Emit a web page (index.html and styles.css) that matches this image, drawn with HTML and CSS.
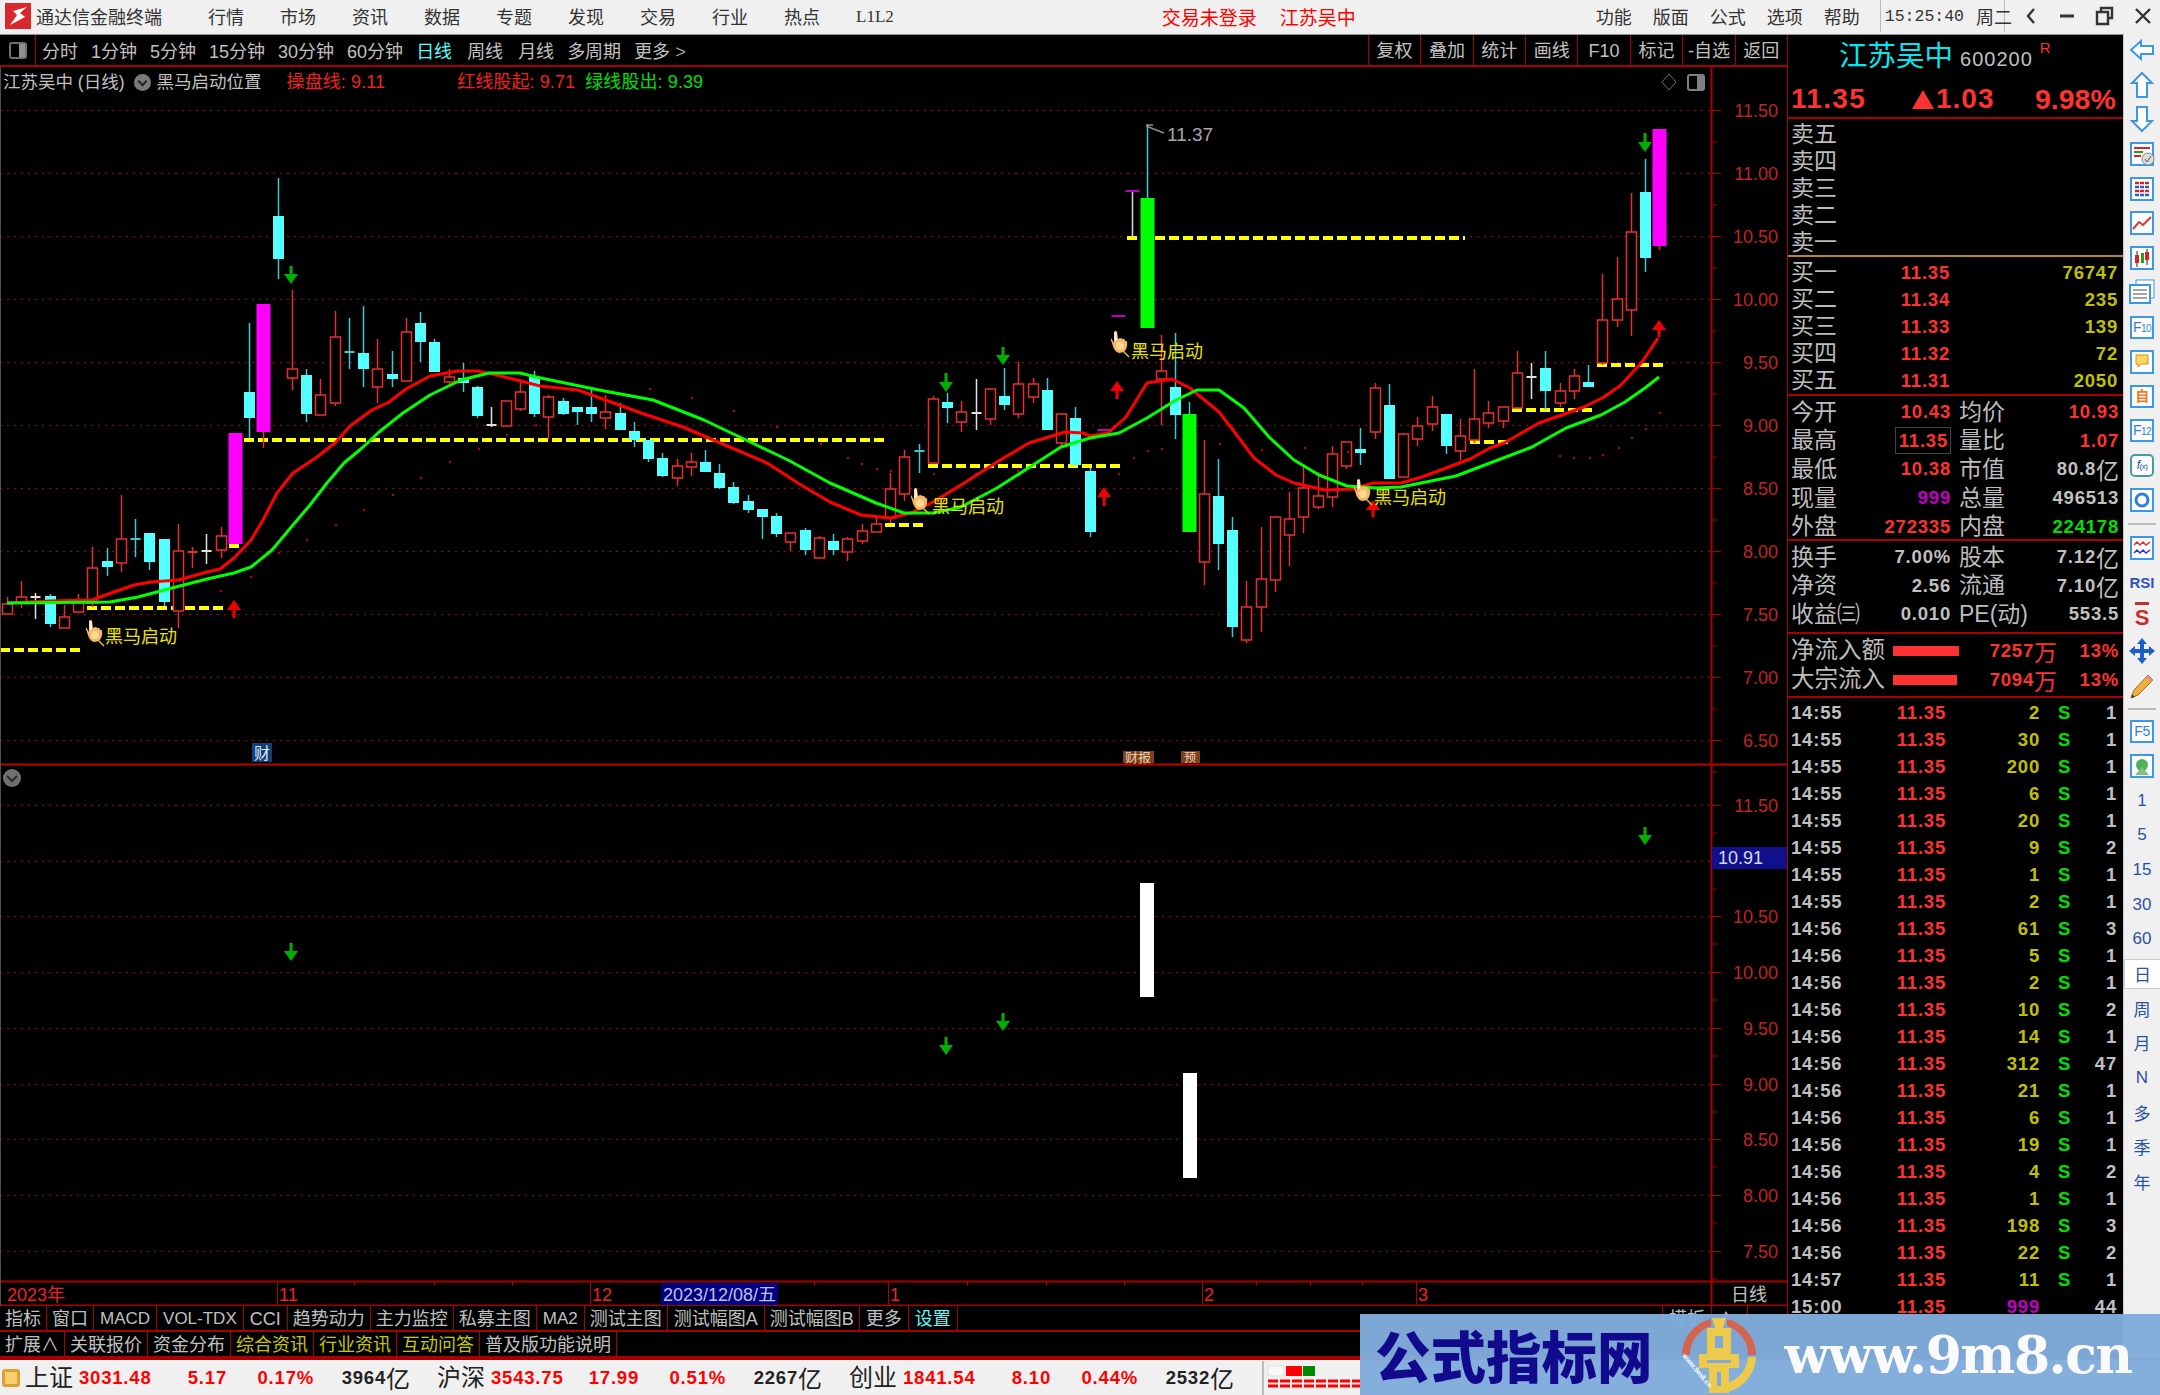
FILE: index.html
```html
<!DOCTYPE html>
<html>
<head>
	<meta charset="utf-8" />
	<title>通达信金融终端</title>
	<link rel="stylesheet" href="styles.css">
</head>
<body>
<div class="menubar">
	<svg class="logo" width="26" height="26" viewBox="0 0 26 26"><rect width="26" height="26" fill="#d8282c"/><path d="M22 4 L8 8 L12 12 L5 22 L20 14 L15 10 Z" fill="#fff"/></svg>
	<span class="app-name">通达信金融终端</span>
	<ul class="menu">
		<li>行情</li><li>市场</li><li>资讯</li><li>数据</li><li>专题</li><li>发现</li><li>交易</li><li>行业</li><li>热点</li><li class="sm">L1L2</li>
	</ul>
	<span class="login">交易未登录</span>
	<span class="login stock">江苏吴中</span>
	<ul class="menu menu-r">
		<li>功能</li><li>版面</li><li>公式</li><li>选项</li><li>帮助</li>
	</ul>
	<div class="clock"><span>15:25:40</span><span class="day">周二</span></div>
	<div class="win-btns">
		<svg width="16" height="24" viewBox="0 0 16 24"><path d="M11 5 L5 12 L11 19" fill="none" stroke="#333" stroke-width="2.4"/></svg>
		<svg width="18" height="24" viewBox="0 0 18 24"><path d="M2 12 H16" stroke="#333" stroke-width="3"/></svg>
		<svg width="20" height="24" viewBox="0 0 20 24"><path d="M6 7 V4 H17 V14 H14 M2 8 H13 V20 H2 Z" fill="none" stroke="#333" stroke-width="2.4"/></svg>
		<svg width="18" height="24" viewBox="0 0 18 24"><path d="M2 5 L16 19 M16 5 L2 19" stroke="#333" stroke-width="2.4"/></svg>
	</div>
</div>

<div class="main">
	<div class="left">
		<div class="toolbar">
			<div class="tool-icon"><span class="tog"><i></i></span></div>
			<ul class="periods">
				<li>分时</li><li>1分钟</li><li>5分钟</li><li>15分钟</li><li>30分钟</li><li>60分钟</li>
				<li class="on">日线</li><li class="wide">周线</li><li class="wide">月线</li><li>多周期</li><li>更多 <b class="gt">&gt;</b></li>
			</ul>
			<ul class="tools">
				<li>复权</li><li>叠加</li><li>统计</li><li>画线</li><li>F10</li><li>标记</li><li>-自选</li><li>返回</li>
			</ul>
		</div>
		<div class="chart">
			<div class="info">
				<span class="info-name">江苏吴中 (日线)</span>
				<span class="round"></span>
				<span class="info-name">黑马启动位置</span>
				<span class="red i1">操盘线: 9.11</span>
				<span class="red i2">红线股起: 9.71</span>
				<span class="green i3">绿线股出: 9.39</span>
			</div>
			<div id="plot"></div>
		</div>
		<div class="tabs">
			<span>指标</span><span>窗口</span><span class="lt">MACD</span><span class="lt">VOL-TDX</span><span class="cci">CCI</span><span>趋势动力</span><span>主力监控</span><span>私募主图</span><span class="lt">MA2</span><span>测试主图</span><span class="wd2">测试幅图A</span><span>测试幅图B</span><span class="more">更多</span><span class="cy">设置</span>
			<span class="tpl">模板</span><span class="arrow">∧</span><span class="arrow end"></span>
		</div>
		<div class="tabs second">
			<span>扩展∧</span><span>关联报价</span><span>资金分布</span><span class="yl">综合资讯</span><span class="yl">行业资讯</span><span class="yl">互动问答</span><span>普及版功能说明</span>
		</div>
	</div>

	<div class="quote">
		<div class="q-head">
			<div class="q-title"><span class="q-name">江苏吴中</span><span class="q-code">600200</span><span class="q-r">R</span></div>
			<div class="q-price"><span class="p1">11.35</span><span class="p2"><i class="tri"></i>1.03</span><span class="p3">9.98%</span></div>
		</div>
		<div class="book sell">
			<div class="row"><span class="lb">卖五</span></div>
			<div class="row"><span class="lb">卖四</span></div>
			<div class="row"><span class="lb">卖三</span></div>
			<div class="row"><span class="lb">卖二</span></div>
			<div class="row"><span class="lb">卖一</span></div>
		</div>
		<div class="book buy">
			<div class="row"><span class="lb">买一</span><span class="n red">11.35</span><span class="n yel">76747</span></div>
			<div class="row"><span class="lb">买二</span><span class="n red">11.34</span><span class="n yel">235</span></div>
			<div class="row"><span class="lb">买三</span><span class="n red">11.33</span><span class="n yel">139</span></div>
			<div class="row"><span class="lb">买四</span><span class="n red">11.32</span><span class="n yel">72</span></div>
			<div class="row"><span class="lb">买五</span><span class="n red">11.31</span><span class="n yel">2050</span></div>
		</div>
		<div class="stats s1">
			<div class="st"><span class="lb">今开</span><span class="n red">10.43</span><span class="lb l2">均价</span><span class="n red">10.93</span></div>
			<div class="st"><span class="lb">最高</span><span class="n red"><em class="box">11.35</em></span><span class="lb l2">量比</span><span class="n red">1.07</span></div>
			<div class="st"><span class="lb">最低</span><span class="n red">10.38</span><span class="lb l2">市值</span><span class="n gry">80.8<u>亿</u></span></div>
			<div class="st"><span class="lb">现量</span><span class="n mag">999</span><span class="lb l2">总量</span><span class="n gry">496513</span></div>
			<div class="st"><span class="lb">外盘</span><span class="n red">272335</span><span class="lb l2">内盘</span><span class="n grn">224178</span></div>
		</div>
		<div class="stats s2">
			<div class="st"><span class="lb">换手</span><span class="n gry">7.00%</span><span class="lb l2">股本</span><span class="n gry">7.12<u>亿</u></span></div>
			<div class="st"><span class="lb">净资</span><span class="n gry">2.56</span><span class="lb l2">流通</span><span class="n gry">7.10<u>亿</u></span></div>
			<div class="st"><span class="lb">收益㈢</span><span class="n gry">0.010</span><span class="lb l2">PE(动)</span><span class="n gry">553.5</span></div>
		</div>
		<div class="flow">
			<div class="fl"><span class="lb">净流入额</span><span><i class="bar" style="width:66px"></i></span><span class="n red">7257<u>万</u></span><span class="n red">13%</span></div>
			<div class="fl"><span class="lb">大宗流入</span><span><i class="bar" style="width:64px"></i></span><span class="n red">7094<u>万</u></span><span class="n red">13%</span></div>
		</div>
		<div class="ticks" id="ticks"></div>
	</div>

	<div class="side">
		<div class="ic"><svg viewBox="0 0 30 30"><path d="M4 15 L14 6 V11 H26 V19 H14 V24 Z" fill="#fff" stroke="#3b97e8" stroke-width="2"/></svg></div>
		<div class="ic"><svg viewBox="0 0 30 30"><path d="M15 3 L25 13 H20 V27 H10 V13 H5 Z" fill="#fff" stroke="#3b97e8" stroke-width="2"/></svg></div>
		<div class="ic"><svg viewBox="0 0 30 30"><path d="M15 27 L25 17 H20 V3 H10 V17 H5 Z" fill="#fff" stroke="#3b97e8" stroke-width="2"/></svg></div>
		<div class="ic"><svg viewBox="0 0 30 30"><rect x="4" y="4" width="22" height="22" fill="#fff" stroke="#3b97e8" stroke-width="2"/><path d="M7 9 H23" stroke="#e02020" stroke-width="2"/><path d="M7 13 H16" stroke="#20a020" stroke-width="2"/><path d="M7 17 H14" stroke="#e02020" stroke-width="2"/><circle cx="21" cy="20" r="6" fill="#ddd" stroke="#888"/><path d="M18 20 L20 23 L24 17" stroke="#555" fill="none"/></svg></div>
		<div class="ic"><svg viewBox="0 0 30 30"><rect x="4" y="4" width="22" height="22" fill="#fff" stroke="#3b97e8" stroke-width="2"/><path d="M8 9 H22 M8 17 H22" stroke="#e02020" stroke-width="2.5" stroke-dasharray="4 1"/><path d="M8 13 H22 M8 21 H22" stroke="#2060d0" stroke-width="2.5" stroke-dasharray="4 1"/></svg></div>
		<div class="ic"><svg viewBox="0 0 30 30"><rect x="4" y="4" width="22" height="22" fill="#fff" stroke="#3b97e8" stroke-width="2"/><path d="M6 21 L12 14 L16 17 L24 9" fill="none" stroke="#e83030" stroke-width="2"/></svg></div>
		<div class="ic"><svg viewBox="0 0 30 30"><rect x="4" y="4" width="22" height="22" fill="#fff" stroke="#3b97e8" stroke-width="2"/><path d="M10 8 V24 M20 6 V22" stroke="#222"/><rect x="8" y="12" width="4" height="8" fill="#e02020"/><rect x="14" y="10" width="3" height="10" fill="#20a020"/><rect x="18" y="9" width="4" height="8" fill="#e02020"/></svg></div>
		<div class="ic"><svg viewBox="0 0 30 30"><rect x="9" y="3" width="18" height="18" fill="#fff" stroke="#3b97e8"/><rect x="3" y="8" width="20" height="18" fill="#fff" stroke="#3b97e8" stroke-width="2"/><path d="M6 13 H20 M6 17 H20 M6 21 H20" stroke="#888" stroke-width="1.5"/></svg></div>
		<div class="ic"><span class="tb">F<small>10</small></span></div>
		<div class="ic"><svg viewBox="0 0 30 30"><rect x="4" y="4" width="22" height="22" fill="#fff" stroke="#3b97e8" stroke-width="2"/><path d="M9 8 H21 V17 H14 L11 20 V17 H9 Z" fill="#ffd860" stroke="#d09020"/></svg></div>
		<div class="ic"><span class="tb or">自</span></div>
		<div class="ic"><span class="tb">F<small>12</small></span></div>
		<div class="ic"><span class="tb tl"><i>f</i><small>(x)</small></span></div>
		<div class="ic"><svg viewBox="0 0 30 30"><rect x="4" y="4" width="22" height="22" fill="#fff" stroke="#3b97e8" stroke-width="2"/><circle cx="15" cy="15" r="6" fill="none" stroke="#2f7fd8" stroke-width="3"/></svg></div>
		<div class="sep"></div>
		<div class="ic"><svg viewBox="0 0 30 30"><rect x="4" y="4" width="22" height="22" fill="#fff" stroke="#3b97e8" stroke-width="2"/><path d="M7 12 L10 9 L13 12 L16 9 L19 12 L23 9" fill="none" stroke="#e03030" stroke-width="1.5"/><path d="M7 20 L10 17 L13 20 L16 17 L19 20 L23 17" fill="none" stroke="#3030d0" stroke-width="1.5"/></svg></div>
		<div class="ic"><span class="rsi">RSI</span></div>
		<div class="ic"><span class="s-mark">S</span></div>
		<div class="ic"><svg viewBox="0 0 30 30"><path d="M15 2 L20 8 H17 V13 H22 V10 L28 15 L22 20 V17 H17 V22 H20 L15 28 L10 22 H13 V17 H8 V20 L2 15 L8 10 V13 H13 V8 H10 Z" fill="#1a5fc8"/></svg></div>
		<div class="ic"><svg viewBox="0 0 30 30"><path d="M21 4 L26 9 L11 24 L4 27 L7 19 Z" fill="#f0b040" stroke="#a07020"/><path d="M4 27 L5 23 L8 26 Z" fill="#444"/><path d="M21 4 L26 9 L24 11 L19 6 Z" fill="#e88"/></svg></div>
		<div class="sep thin"></div>
		<div class="ic"><span class="tb">F5</span></div>
		<div class="ic"><svg viewBox="0 0 30 30"><rect x="4" y="4" width="22" height="22" fill="#fff" stroke="#3b97e8" stroke-width="2"/><circle cx="15" cy="14" r="6" fill="#50b060"/><path d="M8 24 L15 16 L22 24 Z" fill="#80c080"/></svg></div>
		<div class="ic wd">1</div><div class="ic wd">5</div><div class="ic wd">15</div><div class="ic wd">30</div><div class="ic wd">60</div>
		<div class="ic wd cur">日</div><div class="ic wd">周</div><div class="ic wd">月</div><div class="ic wd">N</div><div class="ic wd">多</div><div class="ic wd">季</div><div class="ic wd">年</div>
	</div>
</div>

<div class="statusbar">
	<i class="st-icon"></i>
	<div class="idx"><span class="nm">上证</span><span class="vl">3031.48</span><span class="rt">5.17</span><span class="rt">0.17%</span><span class="am">3964<u>亿</u></span></div>
	<div class="idx"><span class="nm">沪深</span><span class="vl">3543.75</span><span class="rt">17.99</span><span class="rt">0.51%</span><span class="am">2267<u>亿</u></span></div>
	<div class="idx"><span class="nm">创业</span><span class="vl">1841.54</span><span class="rt">8.10</span><span class="rt">0.44%</span><span class="am">2532<u>亿</u></span></div>
	<div class="breadth">
		<svg width="96" height="30" viewBox="0 0 96 30"><rect x="4" y="3" width="16" height="10" fill="#f8f8f8" stroke="#ddd"/><rect x="22" y="3" width="16" height="10" fill="#f00"/><rect x="39" y="3" width="12" height="10" fill="#080"/><path d="M4 18 H96 M4 23 H96" stroke="#f00" stroke-width="3" stroke-dasharray="10 2"/></svg>
	</div>
</div>

<div class="watermark">
	<span class="wm-title">公式指标网</span>
	<svg class="wm-logo" width="80" height="78" viewBox="0 0 80 78">
		<path d="M3 39 A37 37 0 0 1 32 3 L32 10 A30 30 0 0 0 11 39 Z" fill="#d4644e"/>
		<path d="M77 39 A37 37 0 0 0 48 3 L48 10 A30 30 0 0 1 69 39 Z" fill="#d4644e"/>
		<path d="M77 41 A37 37 0 0 1 40 77 L40 68 A29 29 0 0 0 69 41 Z" fill="#edc94c"/>
		<path d="M33 2 H47 L44 12 H52 V38 H60 V52 H50 V77 H30 V52 H20 V38 H28 V12 H36 Z" fill="#edc94c"/>
		<path d="M36 20 H44 V32 H36 Z M28 44 H52 V47 H28 Z M38 56 H42 V70 H38 Z" fill="#7fabd9"/>
		<text x="3" y="40" class="wm-mini" transform="rotate(50 3 40)">www.9m8.cn</text>
	</svg>
	<span class="wm-url">www.9m8.cn</span>
</div>

<script src="chart.js"></script>
</body>
</html>
```

FILE: styles.css
```css
* {
	margin: 0;
	padding: 0;
	box-sizing: border-box;
}
ul {
	list-style: none;
}
html, body {
	width: 2160px;
	height: 1395px;
	overflow: hidden;
}
body {
	position: relative;
	background: #000;
	font: 18px "Liberation Sans", "Noto Sans CJK SC", sans-serif;
	color: #c0c0c0;
}
u {
	text-decoration: none;
}

/* top menu */
.menubar {
	height: 35px;
	background: #f0f0f0;
	border-bottom: 1px solid #909090;
	padding-bottom: 2px;
	display: flex;
	align-items: center;
	color: #333;
	white-space: nowrap;
}
.logo {
	margin-left: 5px;
	margin-right: 5px;
	flex: none;
}
.app-name {
	width: 172px;
}
.menu {
	display: flex;
	gap: 36px;
	align-items: center;
}
.menu .sm {
	font-family: "Liberation Serif", serif;
	font-size: 17px;
	line-height: 26px;
	padding-top: 2px;
}
.login {
	color: #f00;
	font-size: 19px;
	margin-left: 268px;
}
.login.stock {
	margin-left: 23px;
}
.menu-r {
	margin-left: 240px;
	gap: 21px;
}
.clock {
	margin-left: 20px;
	height: 32px;
	width: 125px;
	border-left: 1px solid #bbb;
	border-right: 1px solid #bbb;
	display: flex;
	align-items: center;
	padding-left: 4px;
	font-family: "Liberation Mono", monospace;
	font-size: 16.5px;
}
.clock .day {
	margin-left: 12px;
	font-family: "Noto Sans CJK SC", sans-serif;
	font-size: 18px;
}
.win-btns {
	display: flex;
	align-items: center;
	gap: 19px;
	margin-left: 18px;
}

/* main area */
.main {
	display: flex;
	height: 1323px;
}
.left {
	width: 1788px;
	flex: none;
	border-right: 1px solid #a80000;
	display: flex;
	flex-direction: column;
}
.toolbar {
	height: 32px;
	display: flex;
	border-bottom: 2px solid #a80000;
	align-items: stretch;
	white-space: nowrap;
}
.tool-icon {
	width: 36px;
	border-right: 1px solid #a80000;
	display: flex;
	align-items: center;
	justify-content: center;
}
.tog {
	width: 18px;
	height: 17px;
	border: 2px solid #707070;
	border-radius: 3px;
	display: flex;
	justify-content: flex-end;
}
.tog i {
	display: block;
	width: 6px;
	background: #909090;
}
.periods {
	display: flex;
	gap: 13px;
	align-items: center;
	margin-left: 6px;
}
.periods .on {
	color: #54ffff;
}
.periods .wide {
	margin-left: 2px;
}
.gt {
	font-weight: 400;
	color: #a0a0a0;
}
.tools {
	display: flex;
	margin-left: auto;
}
.tools li {
	width: 52.4px;
	border-left: 1px solid #a80000;
	text-align: center;
	line-height: 32px;
}
.chart {
	position: relative;
	height: 1239px;
}
#plot svg {
	display: block;
}
.info {
	position: absolute;
	left: 3px;
	top: 3px;
	display: flex;
	align-items: center;
	font-size: 17.5px;
	line-height: 24px;
	white-space: nowrap;
}
.round {
	width: 17px;
	height: 17px;
	border-radius: 50%;
	background: #7a7a7a;
	margin: 0 6px 0 9px;
	position: relative;
}
.round:after {
	content: "";
	position: absolute;
	left: 5px;
	top: 4px;
	width: 5px;
	height: 5px;
	border: solid #222;
	border-width: 0 2px 2px 0;
	transform: rotate(45deg);
}
.red {
	color: #f02020;
}
.green {
	color: #00e000;
}
.info .red, .info .green {
	font-size: 18px;
	letter-spacing: 0.1px;
}
.i1 {
	margin-left: 25px;
}
.i2 {
	margin-left: 72px;
}
.i3 {
	margin-left: 10px;
}
.tabs {
	height: 26px;
	display: flex;
	border-bottom: 2px solid #a80000;
	white-space: nowrap;
}
.tabs span {
	padding: 0 5px;
	border-right: 1px solid #a80000;
	line-height: 26px;
}
.tabs.second span {
	line-height: 27px;
}
.tabs .lt {
	font-size: 17px;
	padding: 0 6px;
}
.tabs .cci {
	padding: 0 6px;
}
.tabs .wd2, .tabs .more {
	padding: 0 6px;
}
.tabs .cy {
	color: #54ffff;
	padding: 0 6px;
}
.tabs .yl {
	color: #c8c800;
}
.tabs .tpl {
	margin-left: auto;
	border-left: 1px solid #a80000;
	padding: 0 6px;
}
.tabs .arrow {
	width: 36px;
}
.tabs .arrow.end {
	width: 39px;
	border-right: 0;
}

/* quote panel */
.quote {
	width: 335px;
	flex: none;
	font-size: 23px;
	overflow: hidden;
}
.q-head {
	height: 84px;
	border-bottom: 2px solid #a80000;
}
.q-title {
	display: flex;
	align-items: baseline;
	padding-left: 51px;
	height: 39px;
	padding-top: 3px;
}
.q-name {
	font-size: 28.5px;
	line-height: 36px;
	color: #00e8f0;
}
.q-code {
	font-size: 20px;
	margin-left: 7px;
	color: #c0c0c0;
	letter-spacing: 1px;
}
.q-r {
	font-size: 15px;
	color: #ff3232;
	margin-left: 7px;
	position: relative;
	top: -13px;
}
.q-price {
	display: flex;
	align-items: center;
	height: 45px;
	font-size: 28px;
	font-weight: bold;
	color: #ff3232;
	padding-top: 5px;
}
.p1 {
	width: 124px;
	padding-left: 3px;
	letter-spacing: 1.3px;
}
.p2 {
	width: 123px;
	letter-spacing: 1px;
	display: flex;
	align-items: center;
}
.tri {
	display: block;
	width: 0;
	height: 0;
	border-left: 11px solid transparent;
	border-right: 11px solid transparent;
	border-bottom: 19px solid #ff3232;
	margin-right: 2px;
}
.p3 {
	font-size: 28.5px;
}
.lb {
	white-space: nowrap;
	line-height: 1;
	color: #bcbcbc;
}
.n {
	font-size: 18.5px;
	line-height: 22px;
	font-weight: bold;
	letter-spacing: 0.8px;
	text-align: right;
	white-space: nowrap;
}
.n u, .am u {
	display: inline-block;
	height: 22px;
	line-height: 22px;
	vertical-align: top;
	font-weight: 400;
	letter-spacing: 0;
	font-family: "Noto Sans CJK SC", sans-serif;
}
.n u {
	font-size: 23px;
}
.n.red {
	color: #ff3232;
}
.yel {
	color: #c0c000;
}
.gry {
	color: #c0c0c0;
}
.mag {
	color: #c000c0;
}
.grn {
	color: #00e000;
}
.book {
	padding-top: 2px;
}
.book .row {
	height: 27px;
	display: grid;
	grid-template-columns: 50px 109px 168px;
	padding-left: 3px;
	align-items: center;
}
.sell {
	height: 138px;
	border-bottom: 2px solid #b8862b;
}
.buy {
	height: 139px;
	border-bottom: 2px solid #a80000;
}
.stats {
	padding-top: 2px;
	border-bottom: 2px solid #a80000;
}
.st {
	display: grid;
	grid-template-columns: 50px 110px 60px 108px;
	padding-left: 3px;
	align-items: center;
}
.s1 {
	height: 145px;
}
.s1 .st {
	height: 28.6px;
}
.s2 {
	height: 93px;
}
.s2 .st {
	height: 28.5px;
}
.l2 {
	padding-left: 8px;
}
.box {
	font-style: normal;
	border: 1px solid #444;
	padding: 2px 2px 2px 3px;
}
.flow {
	height: 64px;
	padding-top: 2px;
	border-bottom: 2px solid #a80000;
}
.fl {
	height: 29px;
	display: grid;
	grid-template-columns: 102px 80px 84px 62px;
	padding-left: 3px;
	align-items: center;
}
.fl .lb {
	font-size: 23.5px;
}
.bar {
	display: block;
	height: 10px;
	background: #ff3232;
}
.ticks {
	padding-top: 1px;
}
.tick {
	height: 27px;
	display: grid;
	grid-template-columns: 103px 52px 94px 32px 45px;
	padding-left: 3px;
	align-items: center;
}
.tick .tm {
	text-align: left;
}
.tick .s {
	text-align: left;
	padding-left: 18px;
	color: #00e000;
}

/* right icon strip */
.side {
	width: 37px;
	flex: none;
	background: #f0f0f0;
	display: flex;
	flex-direction: column;
	align-items: center;
	margin-top: -2px;
	position: relative;
	border-left: 1px solid #c8c8c8;
}
.ic {
	width: 100%;
	height: 34.6px;
	flex: none;
	display: flex;
	align-items: center;
	justify-content: center;
}
.ic svg {
	width: 30px;
	height: 30px;
	display: block;
}
.sep {
	width: 28px;
	height: 13px;
	flex: none;
	background: linear-gradient(#bbb, #bbb) center / 100% 2px no-repeat;
}
.sep.thin {
	height: 11px;
}
.tb {
	width: 24px;
	height: 23px;
	background: #fff;
	border: 2px solid #3b97e8;
	color: #2f7fd8;
	font-size: 14px;
	line-height: 19px;
	text-align: center;
	white-space: nowrap;
	letter-spacing: -0.5px;
}
.tb small {
	font-size: 10px;
}
.tb.or {
	color: #ef7a20;
	font-weight: bold;
}
.tb.tl {
	border-color: #40a0a0;
	border-radius: 5px;
	color: #205090;
	font-size: 12px;
}
.tb.tl small {
	font-size: 8px;
}
.rsi {
	color: #3050c0;
	font-weight: bold;
	font-size: 15px;
}
.s-mark {
	font-weight: bold;
	font-size: 22px;
	line-height: 26px;
	color: #c83030;
	border-top: 3px solid #c83030;
}
.wd {
	color: #2a52a0;
	font-size: 17px;
}
.cur {
	background: #fff;
	border: 1px solid #ccc;
	border-width: 1px 0 1px 1px;
	height: 30px;
	margin: 2.3px 0;
}

/* status bar */
.statusbar {
	height: 37px;
	background: #f0f0f0;
	border-top: 2px solid #a80000;
	display: flex;
	align-items: center;
	padding-left: 25px;
	padding-top: 1px;
	position: relative;
	color: #222;
}
.st-icon {
	position: absolute;
	left: 2px;
	top: 9px;
	width: 18px;
	height: 18px;
	background: #f8d070;
	border: 3px solid #e0a030;
	border-radius: 3px;
}
.idx {
	display: grid;
	grid-template-columns: 54px 76px 72px 87px 96px;
	width: 412px;
	flex: none;
	align-items: center;
	white-space: nowrap;
}
.nm {
	font-size: 24px;
	line-height: 30px;
}
.vl, .rt {
	color: #f00;
	font-size: 18.5px;
	font-weight: bold;
	letter-spacing: 0.8px;
}
.rt, .am {
	text-align: right;
}
.am {
	font-size: 18.5px;
	line-height: 22px;
	font-weight: bold;
	letter-spacing: 0.8px;
}
.am u {
	font-size: 24px;
}
.breadth {
	margin-left: 1px;
	border-left: 2px solid #bbb;
	height: 34px;
	padding-top: 2px;
}

/* site banner laid over the corner */
.watermark {
	position: absolute;
	right: 0;
	bottom: 0;
	width: 800px;
	height: 81px;
	background: rgba(128, 172, 220, 0.97);
	display: flex;
	align-items: center;
	white-space: nowrap;
}
.wm-title {
	margin-left: 15px;
	font: 900 55.5px "Noto Sans CJK SC", sans-serif;
	line-height: 1;
	color: #120a8c;
}
.wm-logo {
	margin-left: 26px;
	flex: none;
}
.wm-mini {
	font: bold 7px "Liberation Sans", sans-serif;
	fill: #fff;
}
.wm-url {
	margin-left: 26px;
	font: bold 52px "DejaVu Serif", serif;
	letter-spacing: -1.5px;
	color: #fafafa;
}
```

FILE: chart.js
```js
// type, wick top, body top, body bottom, wick bottom (page y)
var candles = [
	['r',597,604,614,614],['r',581,597,603,608],['w',593,597,597,619],['c',594,596,624,627],['r',605,617,628,628],
	['r',594,601,612,612],['r',547,568,603,607],['c',548,561,567,576],['r',495,539,563,572],['d',519,539,539,557],
	['c',533,533,562,570],['c',539,539,602,606],['r',524,551,611,628],['e',547,552,552,568],['w',534,551,551,564],
	['r',527,536,550,558],['m',433,433,544,544],['c',323,392,418,438],['m',304,304,432,448],['c',178,216,259,279],
	['r',290,369,378,390],['c',369,375,414,422],['r',379,395,415,415],['r',311,337,403,406],['d',318,352,352,369],
	['c',306,353,369,387],['r',339,369,387,403],['c',351,374,379,387],['r',318,332,381,381],['c',312,323,342,362],
	['c',339,342,372,372],['r',369,377,382,387],['c',363,378,383,392],['c',386,387,416,418],['w',407,425,425,427],
	['r',401,401,426,426],['r',380,392,409,411],['c',371,377,414,417],['r',395,397,417,439],['c',398,401,414,415],
	['c',407,407,412,425],['c',390,407,414,422],['r',395,412,418,429],['c',403,413,430,430],['c',422,431,440,447],
	['c',440,440,459,462],['c',453,458,476,477],['r',459,466,478,486],['r',453,462,467,476],['c',450,462,472,472],
	['c',464,473,488,489],['c',482,487,503,504],['c',495,501,510,513],['c',509,509,517,539],['c',513,516,534,537],
	['r',533,533,542,551],['c',528,530,550,555],['r',536,538,558,558],['c',534,541,550,555],['r',537,539,552,561],
	['r',524,531,541,544],['r',518,524,532,532],['r',473,489,518,523],['r',450,457,494,501],['d',444,451,451,473],
	['r',396,399,463,463],['c',393,402,408,423],['r',401,412,422,432],['w',379,413,413,430],['r',389,389,419,425],
	['c',368,396,405,410],['r',362,384,414,418],['r',378,384,397,403],['c',378,390,430,430],['r',414,414,443,448],
	['c',407,418,465,465],['c',468,471,532,537],['p',430],['p',316],['w2',191,191,237,237],
	['g',125,198,328,328],['r',335,371,379,425],['c',333,387,415,439],['g',402,414,532,532],['r',440,494,562,585],
	['c',459,496,544,570],['c',517,530,627,637],['r',581,607,640,643],['r',527,579,607,632],['r',516,517,580,592],
	['r',492,519,535,566],['r',467,488,517,533],['r',472,496,507,509],['r',446,454,497,507],['r',442,442,466,469],
	['c',428,449,453,465],['r',383,388,432,439],['c',384,405,479,479],['r',433,434,477,477],['r',417,426,439,446],
	['r',396,407,424,431],['c',414,414,446,454],['r',419,436,451,460],['r',369,419,440,443],['r',401,413,423,428],
	['r',407,407,421,428],['r',351,373,408,408],['w',363,377,377,399],['c',351,368,391,410],['r',383,391,403,407],
	['r',369,376,391,399],['c',365,382,387,387],['r',274,320,363,365],['r',257,299,320,327],['r',193,232,310,336],
	['c',159,192,258,272],['m',129,129,246,250]
];
var red = [[7,603],[50,601],[92,600],[114,592],[134,585],[151,582],[178,580],[207,572],[220,569],[234,558],[251,540],[263,520],[277,493],[293,473],[317,457],[336,442],[350,426],[372,410],[389,402],[406,389],[430,376],[458,371],[477,371],[492,374],[517,380],[540,386],[578,390],[641,413],[683,427],[725,445],[767,463],[801,485],[830,502],[861,515],[890,518],[911,513],[933,502],[961,485],[997,462],[1029,443],[1065,432],[1083,433],[1090,436],[1108,433],[1126,417],[1147,383],[1172,379],[1190,388],[1219,412],[1233,430],[1254,458],[1276,475],[1294,483],[1325,490],[1353,489],[1373,483],[1401,483],[1422,477],[1446,468],[1470,459],[1490,448],[1504,443],[1518,435],[1539,423],[1559,416],[1584,407],[1604,397],[1621,385],[1642,362],[1658,338]];
var green = [[7,603],[110,602],[138,597],[172,588],[207,579],[234,573],[251,567],[272,550],[293,525],[310,505],[327,483],[344,463],[362,448],[379,432],[403,413],[430,395],[461,380],[489,373],[520,373],[536,377],[599,390],[653,400],[704,420],[746,440],[788,460],[830,483],[876,503],[904,513],[933,513],[961,507],[997,488],[1033,465],[1061,447],[1090,438],[1119,433],[1147,418],[1176,400],[1197,390],[1219,390],[1244,408],[1269,437],[1294,460],[1319,475],[1347,486],[1376,488],[1401,487],[1456,476],[1490,463],[1532,447],[1566,428],[1601,415],[1625,402],[1645,388],[1659,377]];
var dots = [[220,590],[250,576],[278,552],[306,539],[335,524],[363,509],[392,494],[420,477],[449,461],[478,448],[506,434],[535,424],[649,388],[691,397],[733,410],[776,426],[820,443],[847,457],[861,463],[876,468],[890,470],[933,473],[975,473],[1017,470],[1118,473],[1133,457],[1147,450],[1161,448],[1219,443],[1261,449],[1304,447],[1347,451],[1559,455],[1573,457],[1589,457],[1602,454],[1618,447],[1631,437],[1645,428],[1659,412]];
var dashes = [[650,0,84],[608,87,227],[546,229,240],[440,244,884],[525,885,924],[466,928,1124],[238,1127,1465],[442,1470,1508],[410,1512,1594],[365,1597,1664]];

var out = [];
function line(x1, y1, x2, y2, col, w, extra) {
	out.push('<line x1="' + x1 + '" y1="' + y1 + '" x2="' + x2 + '" y2="' + y2 + '" stroke="' + col + '" stroke-width="' + w + '"' + (extra || '') + '/>');
}
function rect(x, y, w, h, col, extra) {
	out.push('<rect x="' + x + '" y="' + y + '" width="' + w + '" height="' + h + '" fill="' + col + '"' + (extra || '') + '/>');
}
function text(x, y, s, col, size, anchor) {
	out.push('<text x="' + x + '" y="' + y + '" fill="' + col + '" font-size="' + size + '"' + (anchor ? ' text-anchor="' + anchor + '"' : '') + '>' + s + '</text>');
}
function poly(pts, col, w) {
	out.push('<polyline points="' + pts.join(' ') + '" fill="none" stroke="' + col + '" stroke-width="' + w + '" stroke-linejoin="round"/>');
}
function arrow(x, y1, y2, col, up) {
	var tip = up ? y1 : y2, base = up ? y1 + 10 : y2 - 10;
	line(x, up ? base : y1, x, up ? y2 : base, col, 3);
	out.push('<path d="M' + (x - 7) + ' ' + base + ' L' + (x + 7) + ' ' + base + ' L' + x + ' ' + tip + ' Z" fill="' + col + '"/>');
}
function hand(x, y) {
	out.push('<g transform="translate(' + x + ' ' + y + ')">' +
		'<path d="M12 19 L20 27" stroke="#d8c020" stroke-width="1.6"/>' +
		'<path d="M3 13 Q1 10 2 8 L5 13 L5 2 Q7 0 8 2 L9 9 Q12 7 13 9 Q16 8 16 11 Q19 10 18 16 Q17 23 10 23 Q5 22 3 13 Z" fill="#f4b868"/>' +
		'<path d="M5.5 2 Q7 1 7.5 2 L8 10 L5.5 12 Z" fill="#fff4e0"/>' +
		'<ellipse cx="11" cy="16" rx="4" ry="4" fill="#ffd890"/></g>');
}

var AX = '#a80000', LAB = '#c02424';
// main panel grid
var prices = ['11.50','11.00','10.50','10.00','9.50','9.00','8.50','8.00','7.50','7.00','6.50'];
prices.forEach(function(p, i) {
	var y = 110 + 63 * i;
	line(0, y + 0.5, 1711, y + 0.5, '#a00000', 1, ' stroke-dasharray="2 5"');
	line(1712, y + 0.5, 1721, y + 0.5, AX, 1);
	line(1712, y + 32, 1717, y + 32, AX, 1);
	text(1778, y + 7, p, LAB, 18, 'end');
});
// lower panel grid
var lower = ['11.50','11.00','10.50','10.00','9.50','9.00','8.50','8.00','7.50'];
lower.forEach(function(p, i) {
	var y = Math.round(805 + 55.7 * i);
	line(0, y + 0.5, 1711, y + 0.5, '#a00000', 1, ' stroke-dasharray="2 5"');
	line(1712, y + 0.5, 1721, y + 0.5, AX, 1);
	line(1712, y + 28, 1717, y + 28, AX, 1);
	if (p !== '11.00') text(1778, y + 7, p, LAB, 18, 'end');
});

// dashed stop lines sit under the solid green/magenta bars
dashes.forEach(function(d) {
	line(d[1], d[0], d[2], d[0], '#ffff00', 4, ' stroke-dasharray="10 4"');
});

candles.forEach(function(c, i) {
	var x = Math.round(7 + 14.245 * i) + 0.5, t = c[0];
	if (t === 'p') {
		line(x - 7, c[1], x + 7, c[1], '#c000c0', 2);
		return;
	}
	if (t === 'w2') {
		line(x, c[1], x, c[4], '#d8d8d8', 1.5);
		line(x - 7, c[1], x + 7, c[1], '#c000c0', 2);
		return;
	}
	var wick = { r: '#e63030', e: '#e63030', m: '#e63030', c: '#40c8d0', d: '#40c8d0', g: '#40c8d0', w: '#e0e0e0' }[t];
	if (c[1] < c[2]) line(x, c[1], x, c[2], wick, 1.5);
	if (c[4] > c[3]) line(x, c[3], x, c[4], wick, 1.5);
	if (t === 'r') {
		out.push('<rect x="' + (x - 5) + '" y="' + c[2] + '" width="10" height="' + (c[3] - c[2]) + '" fill="#000" stroke="#e63030" stroke-width="1.5"/>');
	} else if (t === 'c') {
		rect(x - 5.5, c[2], 11, c[3] - c[2], '#54ffff');
	} else if (t === 'm') {
		rect(x - 7, c[2], 14, c[3] - c[2], '#ff00ff');
	} else if (t === 'g') {
		rect(x - 7, c[2], 14, c[3] - c[2], '#00ff00');
	} else {
		line(x - 5, c[2], x + 5, c[2], wick, 2);
	}
});

dots.forEach(function(d) {
	rect(d[0], d[1], 2, 2, '#c00000');
});
poly(red, '#ff0000', 3);
poly(green, '#00ff00', 3);

[[291,266,284],[946,373,392],[1003,347,365],[1645,133,152],[291,943,961],[946,1037,1055],[1003,1013,1031],[1645,827,845]].forEach(function(a) {
	arrow(a[0], a[1], a[2], '#00b000', false);
});
[[234,600,618],[1117,381,399],[1104,487,506],[1373,500,517],[1659,320,337]].forEach(function(a) {
	arrow(a[0], a[1], a[2], '#f00000', true);
});

rect(1140, 883, 14, 114, '#fff');
rect(1183, 1073, 14, 105, '#fff');

[[84,619,105,643],[1109,330,1131,358],[909,487,932,513],[1352,478,1374,504]].forEach(function(h) {
	hand(h[0], h[1]);
	text(h[2], h[3], '黑马启动', '#e8e000', 18);
});

// high price flag
line(1146, 126, 1164, 133, '#909090', 1.5);
line(1146, 125, 1153, 125, '#909090', 1.5);
text(1167, 141, '11.37', '#a8a8a8', 19);

// corner marks
out.push('<path d="M1669 74 L1676 82 L1669 90 L1662 82 Z" fill="none" stroke="#707070" stroke-width="1"/>');
out.push('<rect x="1688" y="75" width="16" height="15" rx="2" fill="none" stroke="#808080" stroke-width="2"/>');
rect(1697, 76, 6, 13, '#808080');

// event tags on the panel edge
rect(252, 743, 20, 19, '#10407a');
text(254, 759, '财', '#e0e8f0', 16);
rect(1123, 751, 31, 12, '#804020');
text(1125, 762, '财报', '#e8d0b0', 13);
rect(1181, 751, 19, 12, '#804020');
text(1184, 762, '预', '#e8d0b0', 12);

// panel frame
line(0, 764.5, 1787, 764.5, '#c00000', 2);
line(1711.5, 67, 1711.5, 1306, AX, 2);
line(0, 1281.5, 1787, 1281.5, AX, 2);
line(0, 1305.5, 1787, 1305.5, AX, 2);
line(0.5, 67, 0.5, 1306, '#505050', 1);

// handle of lower panel
out.push('<circle cx="12" cy="778" r="9" fill="#707070"/><path d="M7 776 L12 781 L17 776" fill="none" stroke="#2a2a2a" stroke-width="2"/>');

// last price tag
rect(1712, 847, 75, 22, '#10108c');
text(1718, 864, '10.91', '#d8d8f0', 18);

// date axis
[277,590,661,888,1202,1416].forEach(function(x) {
	line(x + 0.5, 1282, x + 0.5, 1305, AX, 1);
});
[354,434,512,814,967,1046,1124,1256,1310,1362].forEach(function(x) {
	line(x + 0.5, 1282, x + 0.5, 1286, AX, 1);
});
text(7, 1301, '2023年', '#f02020', 18);
text(279, 1301, '11', '#f02020', 18);
text(592, 1301, '12', '#f02020', 18);
rect(661, 1283, 117, 22, '#000080');
text(663, 1301, '2023/12/08/五', '#c0c0e8', 18);
text(890, 1301, '1', '#f02020', 18);
text(1204, 1301, '2', '#f02020', 18);
text(1418, 1301, '3', '#f02020', 18);
text(1749, 1301, '日线', '#c0c0c0', 18, 'middle');

document.getElementById('plot').innerHTML =
	'<svg width="1787" height="1239" viewBox="0 67 1787 1239" font-family="Liberation Sans, Noto Sans CJK SC, sans-serif">' + out.join('') + '</svg>';

// trades list
var vols = [2,30,200,6,20,9,1,2,61,5,2,10,14,312,21,6,19,4,1,198,22,11,999];
var cnts = [1,1,1,1,1,2,1,1,3,1,1,2,1,47,1,1,1,2,1,3,2,1,44];
var rows = '';
for (var i = 0; i < vols.length; i++) {
	var tm = i < 8 ? '14:55' : i < 21 ? '14:56' : i < 22 ? '14:57' : '15:00';
	rows += '<div class="tick"><span class="n gry tm">' + tm + '</span><span class="n red">11.35</span>' +
		'<span class="n ' + (vols[i] === 999 ? 'mag' : 'yel') + '">' + vols[i] + '</span>' +
		'<span class="n s">' + (vols[i] === 999 ? '' : 'S') + '</span>' +
		'<span class="n gry">' + cnts[i] + '</span></div>';
}
document.getElementById('ticks').innerHTML = rows;
```
